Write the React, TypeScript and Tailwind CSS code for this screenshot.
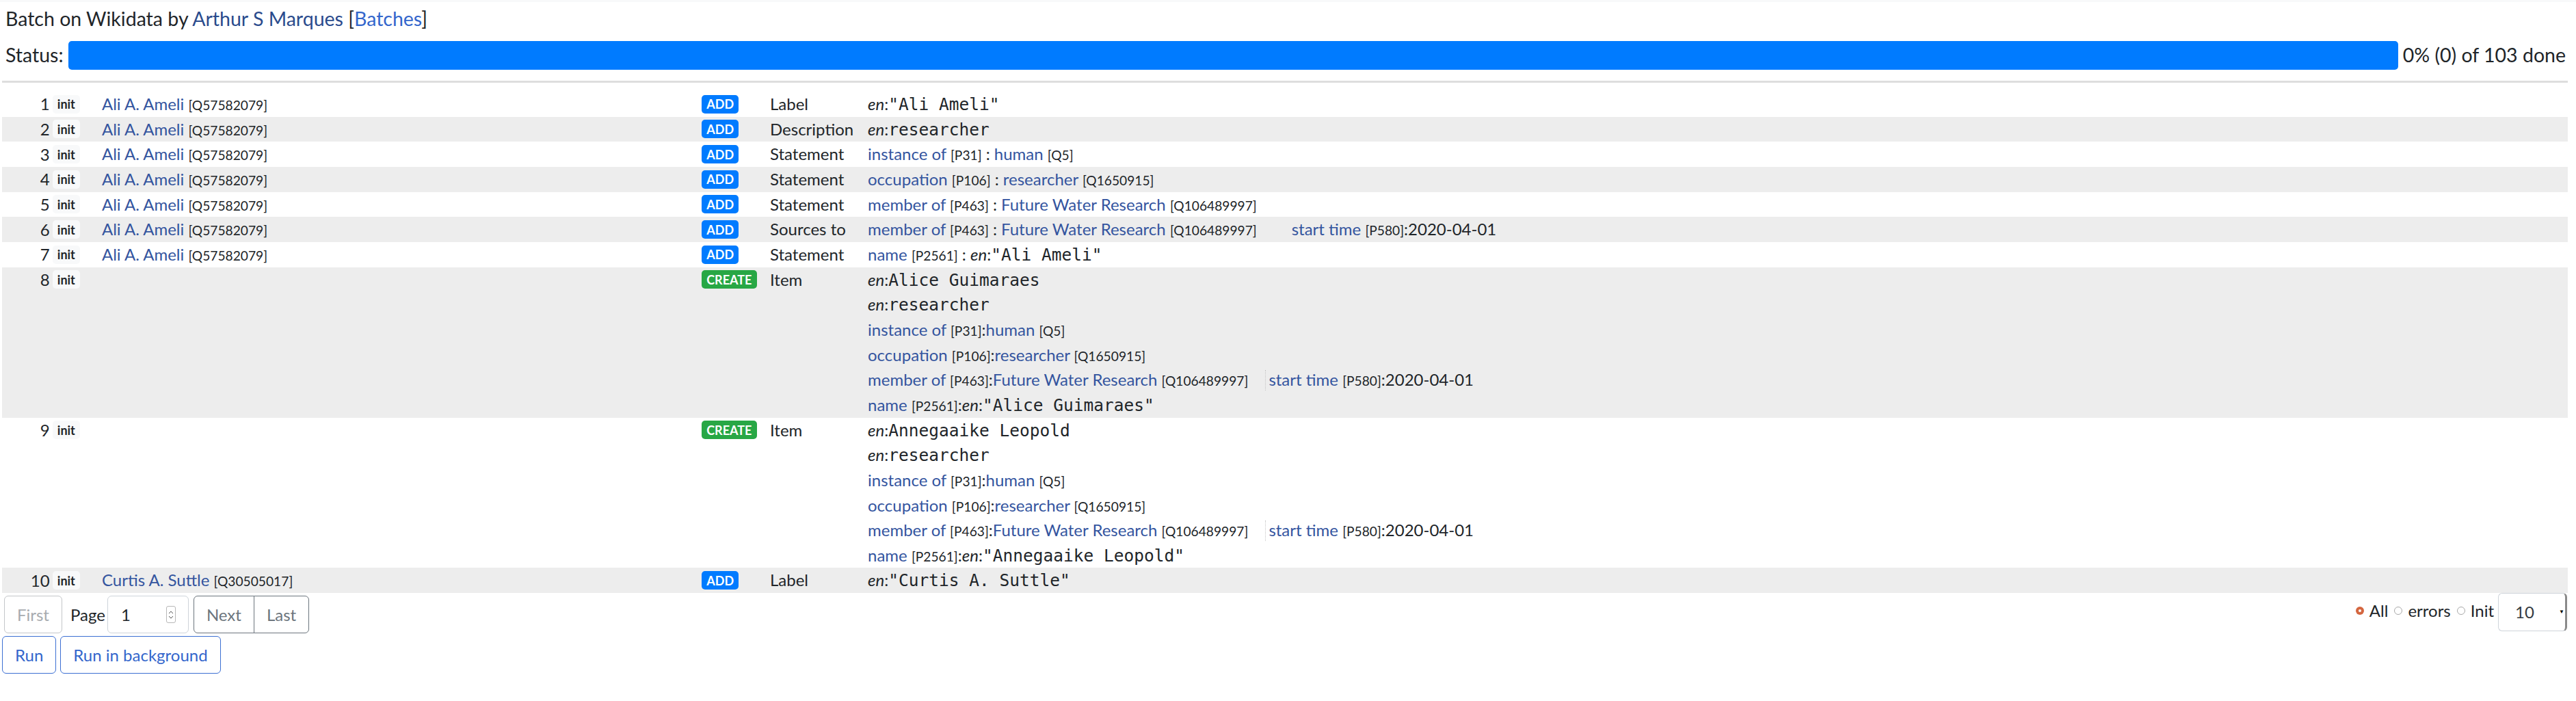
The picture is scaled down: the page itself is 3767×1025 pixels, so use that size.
import React from 'react';

const LINE = 'h-[36.67px] leading-[36.67px] whitespace-nowrap';

function Small({ children }: { children: React.ReactNode }) {
  return <span className="text-[19.2px] text-[#212529]">{children}</span>;
}

function Lnk({ children }: { children: React.ReactNode }) {
  return <a className="text-[#34559f] cursor-pointer">{children}</a>;
}

function Code({ children }: { children: React.ReactNode }) {
  return <span className="font-['DejaVu_Sans_Mono',monospace] text-[24.5px]">{children}</span>;
}

function En() {
  return (
    <>
      <i>en</i>:
    </>
  );
}

function Badge({ kind }: { kind: 'init' | 'ADD' | 'CREATE' }) {
  const cls =
    kind === 'init'
      ? 'bg-[#f8f9fa] text-[#212529]'
      : kind === 'ADD'
        ? 'bg-[#007bff] text-white'
        : 'bg-[#28a745] text-white';
  return (
    <span className={`inline-block ${cls} font-bold text-[18px] leading-none px-[7.2px] py-[4.5px] rounded-[5px]`}>
      {kind}
    </span>
  );
}

function Qualifier({ dotted }: { dotted?: boolean }) {
  return (
    <span
      className={
        dotted
          ? 'inline-block leading-[28px] border-l border-dotted border-[#c4c4c4] ml-[25px] pl-[4px]'
          : 'inline-block ml-[51px]'
      }
    >
      <Lnk>start time</Lnk> <Small>[P580]</Small>:2020-04-01
    </span>
  );
}

type Row = {
  n: number;
  entity?: { label: string; q: string };
  action: 'ADD' | 'CREATE';
  what: string;
  lines: React.ReactNode[];
};

const createLines = (name: string) => [
  <>
    <En />
    <Code>{name}</Code>
  </>,
  <>
    <En />
    <Code>researcher</Code>
  </>,
  <>
    <Lnk>instance of</Lnk> <Small>[P31]</Small>:<Lnk>human</Lnk> <Small>[Q5]</Small>
  </>,
  <>
    <Lnk>occupation</Lnk> <Small>[P106]</Small>:<Lnk>researcher</Lnk> <Small>[Q1650915]</Small>
  </>,
  <>
    <Lnk>member of</Lnk> <Small>[P463]</Small>:<Lnk>Future Water Research</Lnk> <Small>[Q106489997]</Small>
    <Qualifier dotted />
  </>,
  <>
    <Lnk>name</Lnk> <Small>[P2561]</Small>:<En />
    <Code>"{name}"</Code>
  </>,
];

const ali = { label: 'Ali A. Ameli', q: 'Q57582079' };

const rows: Row[] = [
  {
    n: 1,
    entity: ali,
    action: 'ADD',
    what: 'Label',
    lines: [
      <>
        <En />
        <Code>"Ali Ameli"</Code>
      </>,
    ],
  },
  {
    n: 2,
    entity: ali,
    action: 'ADD',
    what: 'Description',
    lines: [
      <>
        <En />
        <Code>researcher</Code>
      </>,
    ],
  },
  {
    n: 3,
    entity: ali,
    action: 'ADD',
    what: 'Statement',
    lines: [
      <>
        <Lnk>instance of</Lnk> <Small>[P31]</Small> : <Lnk>human</Lnk> <Small>[Q5]</Small>
      </>,
    ],
  },
  {
    n: 4,
    entity: ali,
    action: 'ADD',
    what: 'Statement',
    lines: [
      <>
        <Lnk>occupation</Lnk> <Small>[P106]</Small> : <Lnk>researcher</Lnk> <Small>[Q1650915]</Small>
      </>,
    ],
  },
  {
    n: 5,
    entity: ali,
    action: 'ADD',
    what: 'Statement',
    lines: [
      <>
        <Lnk>member of</Lnk> <Small>[P463]</Small> : <Lnk>Future Water Research</Lnk> <Small>[Q106489997]</Small>
      </>,
    ],
  },
  {
    n: 6,
    entity: ali,
    action: 'ADD',
    what: 'Sources to',
    lines: [
      <>
        <Lnk>member of</Lnk> <Small>[P463]</Small> : <Lnk>Future Water Research</Lnk> <Small>[Q106489997]</Small>
        <Qualifier />
      </>,
    ],
  },
  {
    n: 7,
    entity: ali,
    action: 'ADD',
    what: 'Statement',
    lines: [
      <>
        <Lnk>name</Lnk> <Small>[P2561]</Small> : <En />
        <Code>"Ali Ameli"</Code>
      </>,
    ],
  },
  { n: 8, action: 'CREATE', what: 'Item', lines: createLines('Alice Guimaraes') },
  { n: 9, action: 'CREATE', what: 'Item', lines: createLines('Annegaaike Leopold') },
  {
    n: 10,
    entity: { label: 'Curtis A. Suttle', q: 'Q30505017' },
    action: 'ADD',
    what: 'Label',
    lines: [
      <>
        <En />
        <Code>"Curtis A. Suttle"</Code>
      </>,
    ],
  },
];

function Radio({ checked, label }: { checked?: boolean; label: string }) {
  return (
    <span className="flex items-center">
      {checked ? (
        <span className="w-[12px] h-[12px] rounded-full bg-[#d4663f] flex items-center justify-center">
          <span className="w-[4px] h-[4px] rounded-full bg-white" />
        </span>
      ) : (
        <span className="w-[12px] h-[12px] rounded-full border border-[#a9a9a9] bg-white" />
      )}
      <span className="ml-[8px]">{label}</span>
    </span>
  );
}

export default function App() {
  return (
    <div className="min-h-screen bg-white text-[#212529] font-[Lato,sans-serif] text-[24px]">
      <div className="h-[3px] bg-[#f8f9fa]" />
      <div className="pl-[3px] pr-[12px]">
        {/* header */}
        <div className="pl-[5px] mt-[3px] text-[28.5px] leading-[43.5px]">
          Batch on Wikidata by <a className="text-[#2a4b8d]">Arthur S Marques</a> [
          <a className="text-[#3366cc]">Batches</a>]
        </div>
        <div className="pl-[5px] mt-[10px] h-[42px] flex items-center text-[28.5px]">
          <span>Status:</span>
          <div className="ml-[7px] flex-1 h-[42px] rounded-[5px] bg-[#007bff]" />
          <span className="ml-[7px] pr-[3px] whitespace-nowrap">0% (0) of 103 done</span>
        </div>
        <div className="mt-[16px] h-[3px] bg-[#dedede]" />

        {/* commands table */}
        <div className="mt-[13.5px]">
          {rows.map((r) => (
            <div key={r.n} className={`flex ${r.n % 2 === 0 ? 'bg-[#ededed]' : 'bg-white'}`}>
              <div className="w-[119px] shrink-0 h-[36.67px] flex items-center justify-end gap-[4px] pr-[5px]">
                <span>{r.n}</span>
                <Badge kind="init" />
              </div>
              <div className={`w-[899px] shrink-0 pl-[27px] ${LINE}`}>
                {r.entity && (
                  <>
                    <Lnk>{r.entity.label}</Lnk> <Small>[{r.entity.q}]</Small>
                  </>
                )}
              </div>
              <div className="w-[100px] shrink-0 pl-[5px] h-[36.67px] flex items-center">
                <Badge kind={r.action} />
              </div>
              <div className={`w-[143px] shrink-0 pl-[5px] ${LINE}`}>{r.what}</div>
              <div className="flex-1 pl-[5px]">
                {r.lines.map((l, i) => (
                  <div key={i} className={LINE}>
                    {l}
                  </div>
                ))}
              </div>
            </div>
          ))}
        </div>

        {/* pagination + filters */}
        <div className="flex justify-between items-start">
          <div className="flex items-center mt-[4px] ml-[3px]">
            <button className="h-[55px] px-[18px] border border-[#c3c6c9] rounded-[6px] text-[#a7abaf]">First</button>
            <span className="ml-[12px]">Page</span>
            <div className="ml-[3px] w-[119px] h-[55px] border border-[#ced4da] rounded-[6px] flex items-center pl-[19px]">
              <span className="flex-1">1</span>
              <span className="mr-[18px] w-[14px] h-[25px] border border-[#b8b8b8] rounded-[3px] flex flex-col items-center justify-center gap-[2px]">
                <svg width="8" height="5" viewBox="0 0 8 5">
                  <path d="M1 4 L4 1 L7 4" fill="none" stroke="#555" strokeWidth="1" />
                </svg>
                <svg width="8" height="5" viewBox="0 0 8 5">
                  <path d="M1 1 L4 4 L7 1" fill="none" stroke="#555" strokeWidth="1" />
                </svg>
              </span>
            </div>
            <div className="ml-[7px] flex">
              <button className="h-[55px] px-[18px] border border-[#6c757d] rounded-l-[6px] text-[#6c757d]">Next</button>
              <button className="h-[55px] px-[18px] border border-[#6c757d] -ml-px rounded-r-[6px] text-[#6c757d]">Last</button>
            </div>
          </div>
          <div className="flex items-center pr-[1px]">
            <div className="flex items-center gap-[9px] mt-[-4px]">
              <Radio checked label="All" />
              <Radio label="errors" />
              <Radio label="Init" />
            </div>
            <div className="ml-[6px] w-[101px] h-[56px] border border-[#ced4da] border-r-[3px] border-r-[#8a8a8a] rounded-[6px] flex items-center pl-[24px] relative text-[#343a40]">
              10
              <span className="absolute right-[1px] top-[22px] text-[8px] leading-none text-black">▼</span>
            </div>
          </div>
        </div>
        <div className="flex gap-[6px] mt-[4px]">
          <button className="h-[55px] px-[18px] border border-[#3c6fd3] rounded-[6px] text-[#3366cc]">Run</button>
          <button className="h-[55px] px-[18px] border border-[#3c6fd3] rounded-[6px] text-[#3366cc]">Run in background</button>
        </div>
      </div>
    </div>
  );
}
